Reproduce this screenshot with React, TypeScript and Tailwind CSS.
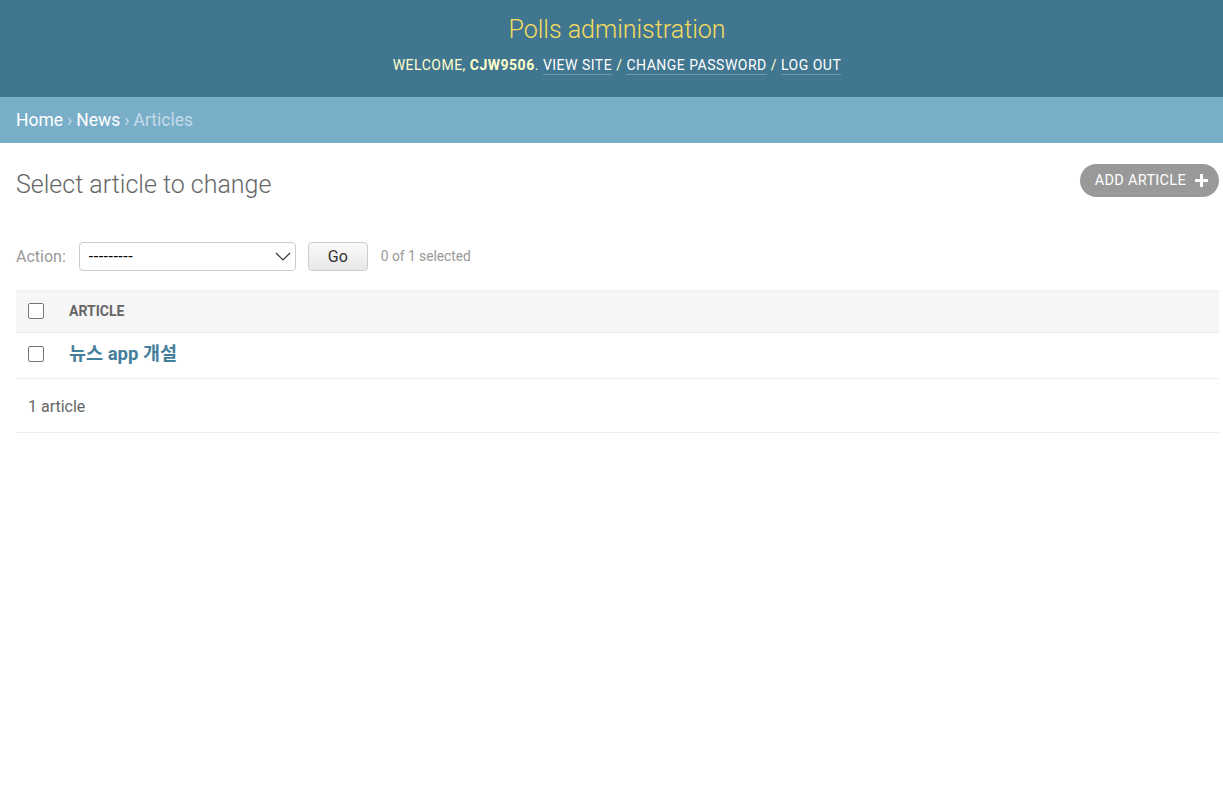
import React from "react";

export default function App() {
  const font = { fontFamily: 'Roboto, "Noto Sans CJK KR", sans-serif' };
  return (
    <div className="min-h-[791px] bg-white text-[#333]" style={font}>
      <header className="bg-[#417690] h-[97px] flex flex-col items-center pt-[12px] pl-[11px]">
        <h1 className="text-[25px] font-light text-[#f5dd5d] leading-[36px]">Polls administration</h1>
        <div className="mt-[7px] text-[14px] tracking-[0.5px] uppercase text-[#ffffcc] leading-[20px]">
          WELCOME, <strong className="font-bold">CJW9506</strong>.{" "}
          <a className="text-white border-b border-white/25 pb-[1px]">View site</a> /{" "}
          <a className="text-white border-b border-white/25 pb-[1px]">Change password</a> /{" "}
          <a className="text-white border-b border-white/25 pb-[1px]">Log out</a>
        </div>
      </header>
      <div className="bg-[#79aec8] h-[46px] flex items-center px-[16px] text-[17.5px] text-[#c4dce8]">
        <a className="text-white">Home</a>
        <span className="mx-[4px]">›</span>
        <a className="text-white">News</a>
        <span className="mx-[4px]">›</span>
        <span>Articles</span>
      </div>
      <div className="pl-[16px] pr-[4px]">
        <div className="flex items-start justify-between pt-[21px]">
          <h1 className="text-[25px] font-light text-[#666] leading-[40px] mt-[1px]">Select article to change</h1>
          <a className="h-[33px] rounded-full bg-[#999] text-white text-[14.5px] tracking-[0.3px] flex items-center pl-[15px] pr-[11px] gap-[9px]">
            ADD ARTICLE
            <svg width="13" height="13" viewBox="0 0 13 13">
              <path d="M5 0h3v5h5v3H8v5H5V8H0V5h5z" fill="white" />
            </svg>
          </a>
        </div>
        <div className="flex items-center mt-[37px] h-[29px]">
          <label className="text-[16px] text-[#999] mr-[13px]">Action:</label>
          <div className="relative w-[217px] h-[29px] border border-[#ccc] rounded-[4px] flex items-center px-[9px] text-[16px] tracking-[0.5px] text-black">
            ---------
            <svg className="absolute right-[4px] top-[8px]" width="16" height="11" viewBox="0 0 16 11">
              <path d="M1 2l7 7 7-7" stroke="#333" strokeWidth="1.2" fill="none" />
            </svg>
          </div>
          <button className="ml-[12px] w-[60px] h-[29px] rounded-[4px] border border-[#ccc] bg-gradient-to-b from-[#fafafa] to-[#e8e8e8] text-[16px] text-[#333]">Go</button>
          <span className="ml-[13px] text-[13.75px] text-[#999]">0 of 1 selected</span>
        </div>
        <div className="mt-[19px]">
          <div className="h-[43px] bg-[#f6f6f6] border-t border-b border-[#eee] flex items-center">
            <div className="w-[16px] h-[16px] border border-[#767676] rounded-[2px] bg-white ml-[12px] -mt-[2px]" />
            <span className="ml-[25px] text-[14px] font-bold text-[#666]">ARTICLE</span>
          </div>
          <div className="h-[46px] border-b border-[#eee] flex items-center">
            <div className="w-[16px] h-[16px] border border-[#767676] rounded-[2px] bg-white ml-[12px] -mt-[4px]" />
            <a className="ml-[25px] text-[18.5px] font-bold text-[#447e9b] -mt-[2px]">뉴스 app 개설</a>
          </div>
          <div className="h-[54px] border-b border-[#eee] flex items-center pl-[12px] pt-[2px] text-[16px] text-[#666]">
            1 article
          </div>
        </div>
      </div>
    </div>
  );
}
